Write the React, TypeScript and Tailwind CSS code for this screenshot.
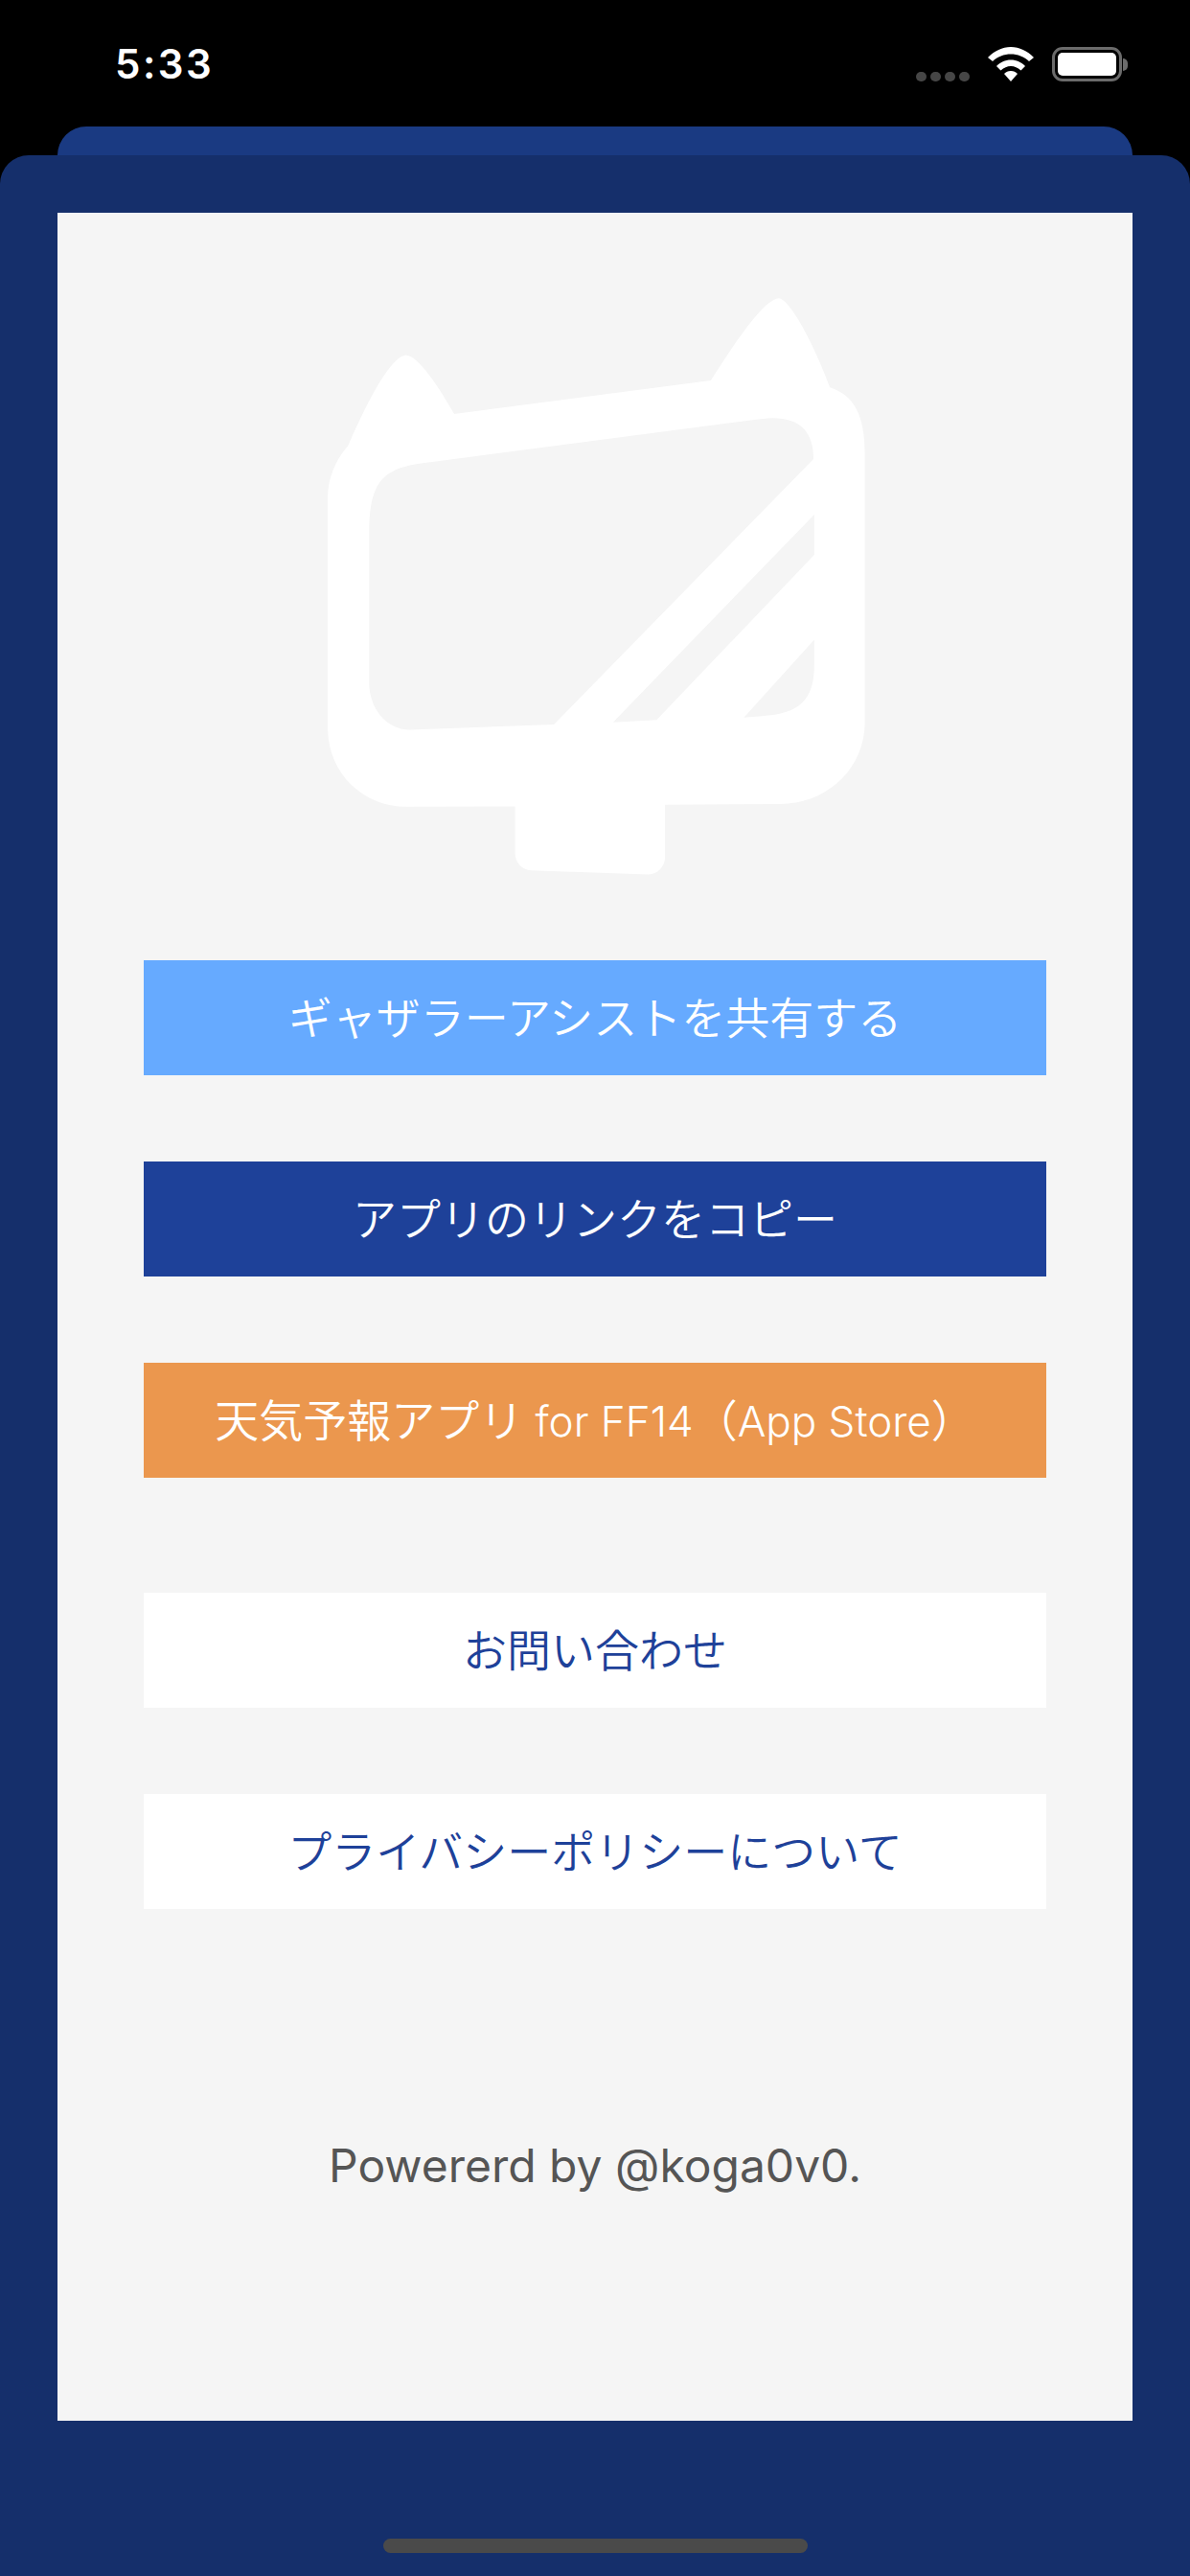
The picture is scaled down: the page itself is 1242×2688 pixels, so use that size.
import type { ReactNode } from 'react';

const jpFont = "font-['Inter','Noto_Sans_CJK_JP',sans-serif]";

/** Mascot logo, drawn in a 600x640 box. */
function Logo() {
  return (
    <svg viewBox="0 0 1568 1568" preserveAspectRatio="none" className="block w-[600px] h-[640px]">
      <path
        fill="#ffffff"
        fillRule="evenodd"
        d="M110 430 C170 300 230 200 268 197 C300 197 360 280 400 348 L1100 262 C1150 190 1240 55 1285 52 C1320 55 1390 190 1425 280 C1490 300 1520 350 1520 450 L1520 1135 C1520 1260 1410 1345 1290 1345 L975 1347 L975 1480 C975 1505 955 1525 930 1525 L610 1515 C585 1513 566 1495 566 1470 L566 1351 L270 1352 C150 1352 55 1265 55 1150 L55 560 C55 510 80 460 110 430 Z
        M300 475 L1240 360 C1340 350 1380 390 1380 463 L672 1142 L280 1155 C210 1155 168 1095 168 1035 L168 650 C168 530 200 490 300 475 Z
        M1382 605 L1382 708 L952 1130 L833 1136 Z
        M1382 925 L1382 990 C1382 1080 1340 1115 1240 1120 L1190 1124 Z"
      />
    </svg>
  );
}

function StatusBar() {
  return (
    <div className="h-[132px] flex justify-between items-start pl-[120px] pr-[65px] pt-[40px] text-white">
      <span className="text-[42px] leading-[54px] tracking-[2.5px] font-semibold font-['Inter',sans-serif]">5:33</span>
      <div className="flex items-end gap-[19px] pt-[9px]">
        <div className="flex gap-[4px]">
          <span className="w-[11px] h-[10px] rounded-full bg-[#464646]" />
          <span className="w-[11px] h-[10px] rounded-full bg-[#464646]" />
          <span className="w-[11px] h-[10px] rounded-full bg-[#464646]" />
          <span className="w-[11px] h-[10px] rounded-full bg-[#464646]" />
        </div>
        <svg viewBox="0 0 48 36" className="w-[48px] h-[36px]">
          <path fill="#fff" d="M24 0 C33 0 41 4 48 11 L43 15 C38 10 31 7.5 24 7.5 C17 7.5 10 10 5 15 L0 11 C7 4 15 0 24 0 Z" />
          <path fill="#fff" d="M24 13.5 C30 13.5 35 16 39 20 L34.500 24.500 C31 21.500 28 20 24 20 C20 20 17 21.500 13.500 24.500 L9 20 C13 16 18 13.500 24 13.500 Z" />
          <path fill="#fff" d="M24 25 C27 25 29 26 31 28 L24 36 L17 28 C19 26 21 25 24 25 Z" />
        </svg>
        <div className="flex items-center">
          <div className="w-[73px] h-[36px] rounded-[11px] border-[3px] border-[#6b6b6b] p-[3px]">
            <div className="w-full h-full rounded-[5px] bg-white" />
          </div>
          <span className="w-[5px] h-[13px] rounded-r-full bg-[#6b6b6b] ml-[1px]" />
        </div>
      </div>
    </div>
  );
}

function MenuButton({ children, className }: { children: ReactNode; className: string }) {
  return (
    <div className={`h-[120px] flex items-center justify-center whitespace-pre text-[46px] font-[350] ${className}`}>
      <span>{children}</span>
    </div>
  );
}

export default function App() {
  return (
    <div className={`w-[1242px] h-[2688px] bg-black flex flex-col overflow-hidden ${jpFont}`}>
      <StatusBar />
      <div className="h-[30px] mx-[60px] shrink-0 rounded-t-[30px] bg-[#1a3a82]" />
      <div className="flex-1 rounded-t-[30px] bg-[#152f6b] flex flex-col items-center pt-[60px]">
        <main className="w-[1122px] h-[2304px] bg-[#f5f5f5] flex flex-col items-center">
          <div className="mt-[68px]">
            <Logo />
          </div>
          <div className="w-[942px] mt-[72px] flex flex-col">
            <MenuButton className="bg-[#66aaff] text-white">ギャザラーアシストを共有する</MenuButton>
            <MenuButton className="mt-[90px] bg-[#1e4199] text-white">アプリのリンクをコピー</MenuButton>
            <MenuButton className="mt-[90px] bg-[#eb974e] text-white">
              天気予報アプリ<span className="text-[44px]"> for FF14</span>（<span className="text-[44px]">App Store</span>）
            </MenuButton>
            <MenuButton className="mt-[120px] bg-white text-[#1e4199]">お問い合わせ</MenuButton>
            <MenuButton className="mt-[90px] bg-white text-[#1e4199]">プライバシーポリシーについて</MenuButton>
          </div>
          <p className="mt-[238px] text-[48px] leading-[60px] text-[#555555]">Powererd by @koga0v0.</p>
        </main>
        <div className="mt-[123px] w-[443px] h-[15px] rounded-[8px] bg-[#4a4a4a]" />
      </div>
    </div>
  );
}
